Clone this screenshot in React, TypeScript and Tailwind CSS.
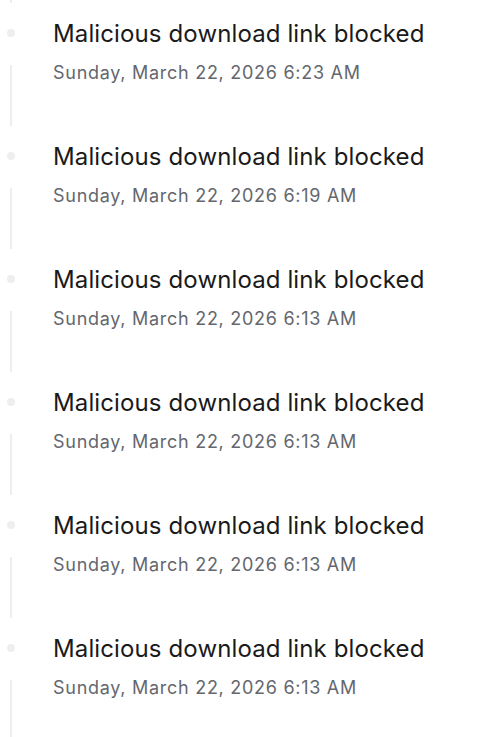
import React from "react";

const EVENTS = [
  { title: "Malicious download link blocked", time: "Sunday, March 22, 2026 6:23 AM" },
  { title: "Malicious download link blocked", time: "Sunday, March 22, 2026 6:19 AM" },
  { title: "Malicious download link blocked", time: "Sunday, March 22, 2026 6:13 AM" },
  { title: "Malicious download link blocked", time: "Sunday, March 22, 2026 6:13 AM" },
  { title: "Malicious download link blocked", time: "Sunday, March 22, 2026 6:13 AM" },
  { title: "Malicious download link blocked", time: "Sunday, March 22, 2026 6:13 AM" },
];

export default function App() {
  return (
    <div className="min-h-screen bg-white font-['Inter',sans-serif]">
      {/* tail of the previous entry's line */}
      <div className="flex h-[3px] w-[22px] justify-center">
        <div className="w-[2px] bg-[#eeeeee]" />
      </div>
      {EVENTS.map((e, i) => (
        <div key={i} className="flex h-[123px]">
          <div className="flex w-[22px] shrink-0 flex-col items-center">
            <div className="mt-[26px] h-2 w-2 rounded-full bg-[#eeeeee]" />
            <div className="mt-[28px] w-[2px] flex-1 bg-[#eeeeee]" />
          </div>
          <div className="ml-[31px] pt-[15px]">
            <p className="text-[24px] leading-8 tracking-[0.12px] text-[#1a1a1a]">{e.title}</p>
            <p className="mt-[9px] text-[18px] leading-7 tracking-[0.72px] text-[#64676e]">{e.time}</p>
          </div>
        </div>
      ))}
    </div>
  );
}
